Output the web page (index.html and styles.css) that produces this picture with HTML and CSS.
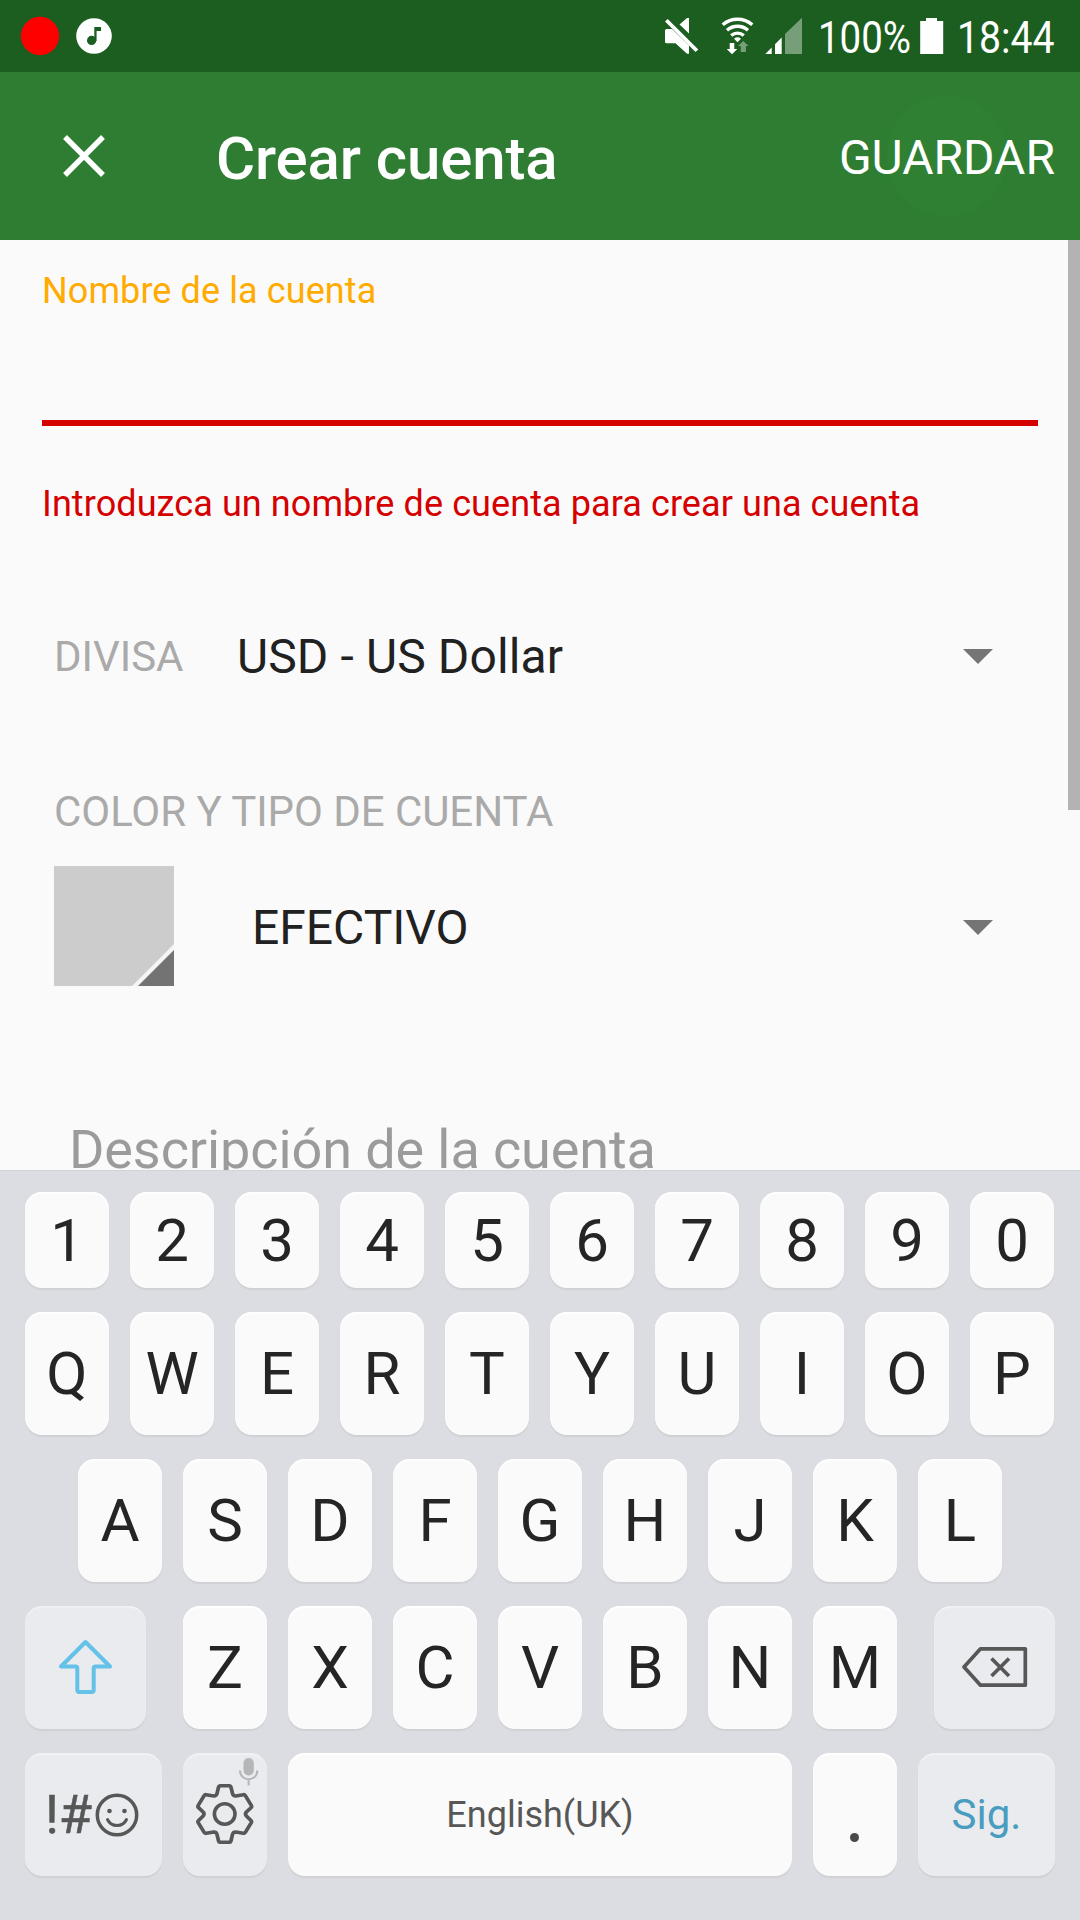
FILE: index.html
```html
<!DOCTYPE html>
<html lang="es">
<head>
<meta charset="utf-8">
<title>Crear cuenta</title>
<link rel="stylesheet" href="styles.css">
</head>
<body>
<div class="screen">
  <header class="status">
    <svg class="status-left" width="140" height="72" viewBox="0 0 140 72">
      <circle cx="40" cy="36" r="19.2" fill="#f00"/>
      <circle cx="94" cy="36" r="17.8" fill="#fff"/>
      <path d="M94.3 27H101v4h-4.4v10h-2.3z" fill="#1b5e20"/>
      <circle cx="91.6" cy="40.4" r="4.6" fill="#1b5e20"/>
    </svg>
    <svg class="status-icons" width="160" height="72" viewBox="655 0 160 72">
      <g fill="#fff">
        <path d="M665 30.500Q665 29 666.500 29H672L689 45.500V53.700H687L675.500 43.300H666.500Q665 43.300 665 41.800zM689 18v15.500L679.500 24.600 687 18z"/>
        <path d="M667.700 19L698.300 49.600 695.500 52 665 21.600z"/>
      </g>
      <g fill="none" stroke="#fff" stroke-width="3.300">
        <path d="M722.700 24.800a22.500 22.500 0 0 1 29.600 0"/>
        <path d="M727 30.200a16 16 0 0 1 21 0"/>
        <path d="M731.200 35.400a9.800 9.800 0 0 1 12.600 0"/>
      </g>
      <path d="M734 38.700q3.500-2.700 7 0l-3.500 3.500z" fill="#fff"/>
      <path d="M729.700 43h4.600v6h3l-5.300 5.300-5.300-5.300h3z" fill="#fff"/>
      <path d="M743.300 41l5.300 5h-2.700v6h-5.200v-6H738z" fill="#769e79"/>
      <path d="M765.300 54l6.400-6.400V54zM775 54V44.300l6.700-6.700V54z" fill="#fff"/>
      <path d="M785 54V34l17-16.300V54z" fill="#769e79"/>
    </svg>
    <span class="stat-text battery-level">100%</span>
    <svg class="battery" width="24" height="36" viewBox="0 0 24 36"><path d="M6 0h11v3h6.200v33H.2V3H6z" fill="#fff"/></svg>
    <span class="stat-text clock">18:44</span>
  </header>

  <div class="appbar">
    <svg class="close" width="42" height="42" viewBox="0 0 42 42"><path d="M2 2l38 38M40 2L2 40" stroke="#fff" stroke-width="5.400"/></svg>
    <h1 class="title">Crear cuenta</h1>
    <button class="save">GUARDAR</button>
  </div>

  <main class="form">
    <div class="scrollbar"></div>
    <label class="name-label">Nombre de la cuenta</label>
    <div class="name-line"></div>
    <div class="error">Introduzca un nombre de cuenta para crear una cuenta</div>
    <div class="row currency">
      <span class="caption">DIVISA</span>
      <span class="value">USD - US Dollar</span>
      <svg class="arrow" width="30" height="15" viewBox="0 0 30 15"><path d="M0 0h30L15 15z" fill="#757575"/></svg>
    </div>
    <div class="caption section">COLOR Y TIPO DE CUENTA</div>
    <div class="row type">
      <svg class="swatch" width="120" height="120" viewBox="0 0 120 120"><path d="M0 0h120v120H0z" fill="#ccc"/><path d="M120 78v42H78z" fill="#f5f5f5"/><path d="M120 84v36H84z" fill="#737373"/></svg>
      <span class="value">EFECTIVO</span>
      <svg class="arrow" width="30" height="15" viewBox="0 0 30 15"><path d="M0 0h30L15 15z" fill="#757575"/></svg>
    </div>
    <div class="description">Descripción de la cuenta</div>
  </main>

  <section class="keyboard">
    <div class="keys digits"><b>1</b><b>2</b><b>3</b><b>4</b><b>5</b><b>6</b><b>7</b><b>8</b><b>9</b><b>0</b></div>
    <div class="keys"><b>Q</b><b>W</b><b>E</b><b>R</b><b>T</b><b>Y</b><b>U</b><b>I</b><b>O</b><b>P</b></div>
    <div class="keys home"><b>A</b><b>S</b><b>D</b><b>F</b><b>G</b><b>H</b><b>J</b><b>K</b><b>L</b></div>
    <div class="keys">
      <b class="fn shift"><svg width="121" height="123" viewBox="0 0 121 123"><path d="M60.500 36L85 60.500H70.500Q68.700 60.500 68.700 62.500V84q0 2-2 2H54.300q-2 0-2-2V62.500Q52.300 60.500 50.500 60.500H36z" fill="none" stroke="#64c1e8" stroke-width="4" stroke-linejoin="round"/></svg></b>
      <b>Z</b><b>X</b><b>C</b><b>V</b><b>B</b><b>N</b><b>M</b>
      <b class="fn back"><svg width="121" height="123" viewBox="0 0 121 123"><g fill="none" stroke="#575757" stroke-width="3.700" stroke-linejoin="round"><path d="M30 61L46.500 42.800H91.300V79.200H46.500z"/><path d="M57.500 52.500l17.500 17.500M75 52.500L57.500 70"/></g></svg></b>
    </div>
    <div class="keys">
      <b class="fn symbols"><span>!#</span><svg width="44" height="44" viewBox="0 0 44 44"><circle cx="22" cy="22" r="19.700" fill="none" stroke="#575757" stroke-width="3.500"/><circle cx="14.500" cy="18" r="2.300" fill="#575757"/><circle cx="29.500" cy="18" r="2.300" fill="#575757"/><path d="M12.500 26.500a10.500 10.500 0 0 0 19 0" fill="none" stroke="#575757" stroke-width="3" stroke-linecap="round"/></svg></b>
      <b class="fn settings"><svg width="84" height="123" viewBox="0 0 84 123"><g fill="none" stroke="#575757" stroke-width="3.600" stroke-linejoin="round"><circle cx="41.700" cy="61" r="10.300"/><path transform="translate(-1.200 0) scale(1.030 1)" d="M37 32.800h9.400q1 0 1.300 1.200l1.600 6.800q.7 2.300 3 2.200l7.500-1.300q1.200-.2 1.900.9l5.900 10q.6 1-.2 1.800l-4.700 4.600q-1.700 2 0 4l4.700 4.700q.8.800.2 1.700l-5.900 10q-.7 1.100-1.900.9l-7.500-1.300q-2.300-.1-3 2.200l-1.600 6.800q-.3 1.200-1.300 1.200H37q-1 0-1.300-1.200l-1.600-6.800q-.7-2.300-3-2.200l-7.500 1.300q-1.200.2-1.900-.9l-5.900-10q-.6-.9.200-1.700l4.700-4.700q1.700-2 0-4L16 54.400q-.8-.8-.2-1.800l5.900-10q.7-1.100 1.900-.9l7.500 1.300q2.300.1 3-2.200l1.600-6.800q.3-1.200 1.300-1.200z"/></g><rect x="60.500" y="5" width="10.300" height="17.500" rx="5" fill="#b5b6b8"/><path d="M57 17.500c0 11.500 17.300 11.500 17.300 0M65.600 26v6.500" fill="none" stroke="#b5b6b8" stroke-width="2"/></svg></b>
      <b class="space">English(UK)</b>
      <b class="dot"><i></i></b>
      <b class="fn next">Sig.</b>
    </div>
  </section>
</div>
</body>
</html>
```

FILE: styles.css
```css
* { box-sizing: border-box; }
body { margin: 0; font-family: Roboto, "Liberation Sans", sans-serif; }
svg { display: block; flex: none; }
.screen { width: 1080px; height: 1920px; display: flex; flex-direction: column; overflow: hidden; background: #fafafa; }

.status { height: 72px; flex: none; background: #1b5e20; display: flex; align-items: center; color: #fff; }
.status-icons { margin-left: 515px; }
.stat-text { font-size: 45px; line-height: 54px; padding-top: 3px; transform: scaleX(.87); transform-origin: 0 50%; white-space: nowrap; }
.battery-level { width: 102px; margin-left: 3px; transform: scaleX(.855); }
.clock { margin-left: 13px; }

.appbar { height: 168px; flex: none; background: radial-gradient(circle at 947px 84px, #308034 59.500px, #2e7d32 60.500px); display: flex; align-items: center; padding: 0 25px 0 63px; color: #fff; }
.title { margin: 5px 0 0 111px; font-size: 60px; font-weight: 500; line-height: 70px; letter-spacing: -.12px; }
.save { margin: 3px 0 0 auto; padding: 0; border: 0; background: none; color: #fff; font: 400 48px/56px Roboto, sans-serif; }

.form { height: 930px; flex: none; padding-top: 30px; overflow: hidden; position: relative; }
.scrollbar { position: absolute; top: 0; right: 0; width: 12px; height: 570px; background: #b3b3b3; }
.name-label { display: block; margin-left: 42px; font-size: 36px; line-height: 42px; letter-spacing: .1px; color: #ffab00; }
.name-line { margin: 108px 42px 57px; height: 6px; background: #d50000; }
.error { margin-left: 42px; font-size: 36px; line-height: 42px; letter-spacing: .09px; color: #d50000; white-space: nowrap; }
.row { display: flex; align-items: center; padding: 0 87px 0 54px; }
.currency { height: 113px; margin-top: 75px; }
.caption { font-size: 42px; line-height: 50px; color: #aaa; }
.currency .caption { width: 183px; }
.value { font-size: 48px; line-height: 56px; color: #212121; }
.currency .value { letter-spacing: .12px; }
.arrow { margin-left: auto; }
.section { margin: 74px 0 0 54px; letter-spacing: -.05px; }
.type { height: 120px; margin-top: 29px; }
.type .value { margin: 3px 0 0 78px; }
.type .arrow { margin-top: 3px; }
.description { margin: 132px 0 0 69px; font-size: 54px; line-height: 64px; letter-spacing: -.1px; color: #9b9b9b; white-space: nowrap; }

.keyboard { flex: 1; background: #dcdde2; border-top: 1px solid #d2d4d6; padding: 21px 25px 0; display: flex; flex-direction: column; gap: 24px; }
.keys { display: flex; gap: 21px; height: 123px; flex: none; }
.digits { height: 96px; }
.home { padding-left: 53px; }
.keys b { width: 84px; flex: none; display: flex; align-items: center; justify-content: center; border-radius: 17px; background: #fafafa; color: #252525; font-size: 60px; font-weight: 400; box-shadow: 0 2px 1px #d0d1d5, inset 0 2px 1px #fff; }
.keys .fn { background: #e9ebef; color: #575757; box-shadow: 0 2px 1px #cfd0d4, inset 0 2px 1px #f0f1f3; }
.keys .shift { width: 121px; margin-right: 16px; }
.keys .back { width: 121px; margin-left: 16px; }
.keys .symbols { width: 137px; padding-right: 3px; font-size: 54px; }
.symbols span { -webkit-text-stroke: .5px #575757; }
.symbols svg { margin-left: 3px; }
.keys .space { width: 504px; font-size: 36px; color: #575757; }
.dot i { width: 9px; height: 9px; margin: 45px 1px 0 0; border-radius: 50%; background: #484848; }
.keys .next { width: 137px; font-size: 42px; color: #4a9dbf; }
```
